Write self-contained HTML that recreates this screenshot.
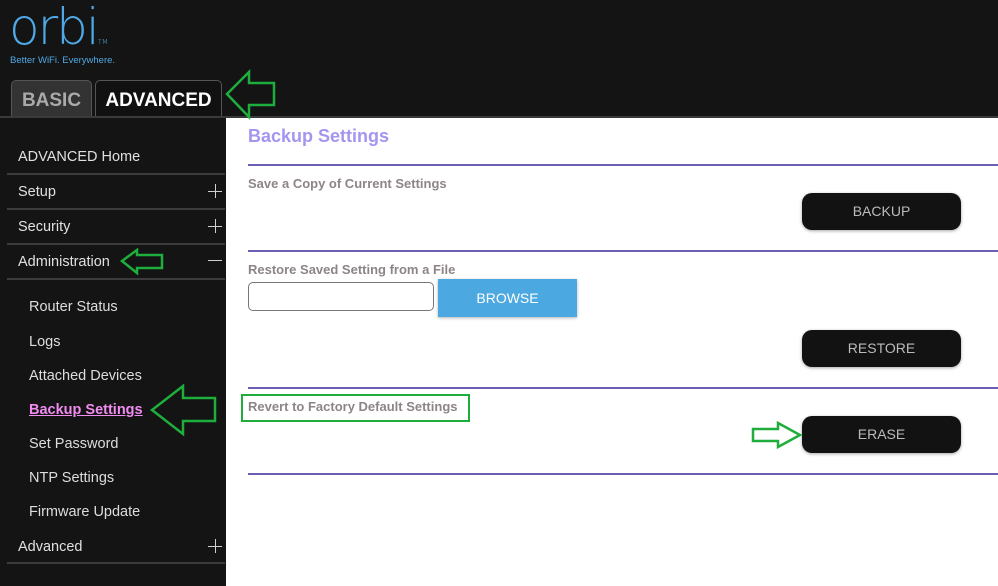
<!DOCTYPE html>
<html><head><meta charset="utf-8"><style>
*{margin:0;padding:0;box-sizing:border-box}
body{width:998px;height:586px;background:#141414;position:relative;overflow:hidden;font-family:"Liberation Sans",Arial,sans-serif}
.a{position:absolute}
.logo{left:9px;top:-2px;color:#4fa9e6;font-size:50px;font-family:"DejaVu Sans","Liberation Sans",sans-serif;font-weight:300;letter-spacing:-2px}
.tag{left:10px;top:55px;color:#4fa9e6;font-size:9.5px}
.tab{top:80px;height:38px;border-radius:5px 5px 0 0;font-weight:bold;font-size:19px;text-align:center;line-height:40px}
.hl{left:0;top:116px;width:998px;height:2px;background:#3a3a3a}
.main{left:226px;top:118px;width:772px;height:468px;background:#fff}
.nav{left:18px;color:#e0e0e0;font-size:14.5px}
.sub{left:29px;color:#ddd;font-size:14.5px}
.sl{left:7px;width:218px;height:2px;background:#3c3c3c}
.h{left:208px;width:14px;height:1px;background:#cfcfcf}
.v{left:215px;width:1px;height:14px;background:#cfcfcf}
.pur{left:248px;width:750px;height:2px;background:#6b5fb3}
.lab{left:248px;color:#8d8585;font-weight:bold;font-size:13px}
.btn{left:802px;width:159px;height:37px;background:#121212;border-radius:10px;color:#bbb;font-size:14px;text-align:center;line-height:37px;box-shadow:0 1px 3px rgba(0,0,0,.35)}
</style></head><body>
<div class="a logo">orbi<span style="font-size:7px;letter-spacing:0">TM</span></div>
<div class="a tag">Better WiFi. Everywhere.</div>
<div class="a tab" style="left:11px;width:81px;background:#333;border:1px solid #555;color:#aaa">BASIC</div>
<div class="a tab" style="left:95px;width:127px;background:#111;border:1px solid #555;color:#fff">ADVANCED</div>
<div class="a hl"></div>
<div class="a main"></div>

<div class="a nav" style="top:149px">ADVANCED Home</div>
<div class="a sl" style="top:173px"></div>
<div class="a nav" style="top:184px">Setup</div><div class="a h" style="top:191px"></div><div class="a v" style="top:184px"></div>
<div class="a sl" style="top:208px"></div>
<div class="a nav" style="top:219px">Security</div><div class="a h" style="top:226px"></div><div class="a v" style="top:219px"></div>
<div class="a sl" style="top:243px"></div>
<div class="a nav" style="top:254px">Administration</div><div class="a h" style="top:260px"></div>
<div class="a sl" style="top:278px"></div>
<div class="a sub" style="top:299px">Router Status</div>
<div class="a sub" style="top:334px">Logs</div>
<div class="a sub" style="top:368px">Attached Devices</div>
<div class="a sub" style="top:402px;color:#f08cf0;font-weight:bold;text-decoration:underline">Backup Settings</div>
<div class="a sub" style="top:436px">Set Password</div>
<div class="a sub" style="top:470px">NTP Settings</div>
<div class="a sub" style="top:504px">Firmware Update</div>
<div class="a nav" style="top:539px">Advanced</div><div class="a h" style="top:546px"></div><div class="a v" style="top:539px"></div>
<div class="a sl" style="top:562px"></div>

<div class="a" style="left:248px;top:126px;color:#a495f0;font-weight:bold;font-size:18px">Backup Settings</div>
<div class="a pur" style="top:164px"></div>
<div class="a lab" style="top:176px">Save a Copy of Current Settings</div>
<div class="a btn" style="top:193px">BACKUP</div>
<div class="a pur" style="top:250px"></div>
<div class="a lab" style="top:262px">Restore Saved Setting from a File</div>
<div class="a" style="left:248px;top:282px;width:186px;height:29px;border:1px solid #777;border-radius:5px"></div>
<div class="a" style="left:438px;top:279px;width:139px;height:38px;background:#4ca8e0;color:#fff;font-size:14px;text-align:center;line-height:38px;box-shadow:0 1px 3px rgba(0,0,0,.3)">BROWSE</div>
<div class="a btn" style="top:330px">RESTORE</div>
<div class="a pur" style="top:387px"></div>
<div class="a lab" style="top:399px">Revert to Factory Default Settings</div>
<div class="a" style="left:241px;top:394px;width:229px;height:28px;border:2px solid #1fae3c"></div>
<div class="a btn" style="top:416px">ERASE</div>
<div class="a pur" style="top:473px"></div>

<svg class="a" style="left:0;top:0" width="998" height="586">
<g fill="none" stroke="#1fae3c" stroke-width="2.5">
<polygon points="227,94 249,72 249,83 274,83 274,105 249,105 249,117"/>
<polygon points="122,261 137,250 137,255 162,255 162,268 137,268 137,273"/>
<polygon points="152,410 183,386 183,398 215,398 215,421 183,421 183,434"/>
<polygon points="800,435 778,423 778,429 753,429 753,441 778,441 778,447"/>
</g></svg>
</body></html>
